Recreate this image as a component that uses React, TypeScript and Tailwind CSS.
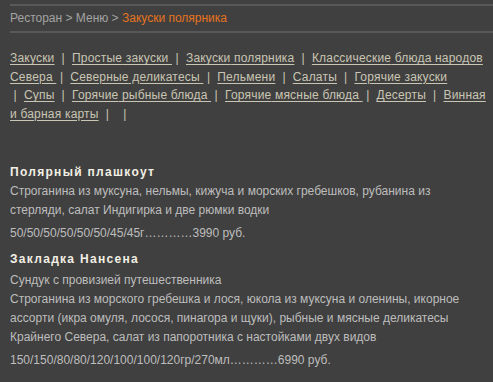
import React from "react";

const links: string[] = [
  "Закуски",
  "Простые закуски ",
  "Закуски полярника",
  "Классические блюда народов Севера ",
  "Северные деликатесы ",
  "Пельмени",
  "Салаты",
  "Горячие закуски",
  "Супы",
  "Горячие рыбные блюда ",
  "Горячие мясные блюда ",
  "Десерты",
  "Винная и барная карты",
];

export default function App() {
  return (
    <div
      className="w-[493px] h-[382px] bg-[#404040] overflow-hidden pl-[10px] pr-[10px] pt-[4px] text-[12px]"
      style={{ fontFamily: '"Liberation Sans", Arial, sans-serif' }}
    >
      <div className="border-t-2 border-b-2 border-[#585858] -mr-[10px] h-[29px] leading-[25px] text-[#a3a3a3]">
        Ресторан &gt; Меню &gt; <span className="text-[#e6731e]">Закуски полярника</span>
      </div>
      <div className="mt-[16px] -mr-[4px] leading-[18.5px] text-[#c9c5b3] tracking-[0.2px]">
        {links.map((l, i) => {
          const idx = l.indexOf(" ");
          const first = idx === -1 ? l : l.slice(0, idx);
          const rest = idx === -1 ? "" : l.slice(idx);
          return (
            <React.Fragment key={i}>
              {i > 0 ? " " : ""}
              <span className="whitespace-nowrap">
                {i > 0 ? "\u00a0|\u00a0\u00a0" : ""}
                <a className="underline underline-offset-2 cursor-pointer">{first}</a>
              </span>
              {rest && <a className="underline underline-offset-2 cursor-pointer">{rest}</a>}
            </React.Fragment>
          );
        })}
        {" \u00a0|\u00a0\u00a0 \u00a0|"}
      </div>
      <div className="mt-[40px] text-[#bdbdbd] leading-[19px]">
        <div className="font-bold text-[#f2efe4] tracking-[1.3px]">Полярный плашкоут</div>
        <div>
          Строганина из муксуна, нельмы, кижуча и морских гребешков, рубанина из стерляди, салат
          Индигирка и две рюмки водки
        </div>
        <div className="mt-[4px]">50/50/50/50/50/50/45/45г…………3990 руб.</div>
        <div className="mt-[7px] font-bold text-[#f2efe4] tracking-[1.3px]">Закладка Нансена</div>
        <div className="mt-[2px]">Сундук с провизией путешественника</div>
        <div>
          Строганина из морского гребешка и лося, юкола из муксуна и оленины, икорное ассорти
          (икра омуля, лосося, пинагора и щуки), рыбные и мясные деликатесы Крайнего Севера,
          салат из папоротника с настойками двух видов
        </div>
        <div className="mt-[4px]">150/150/80/80/120/100/100/120гр/270мл…………6990 руб.</div>
      </div>
    </div>
  );
}
